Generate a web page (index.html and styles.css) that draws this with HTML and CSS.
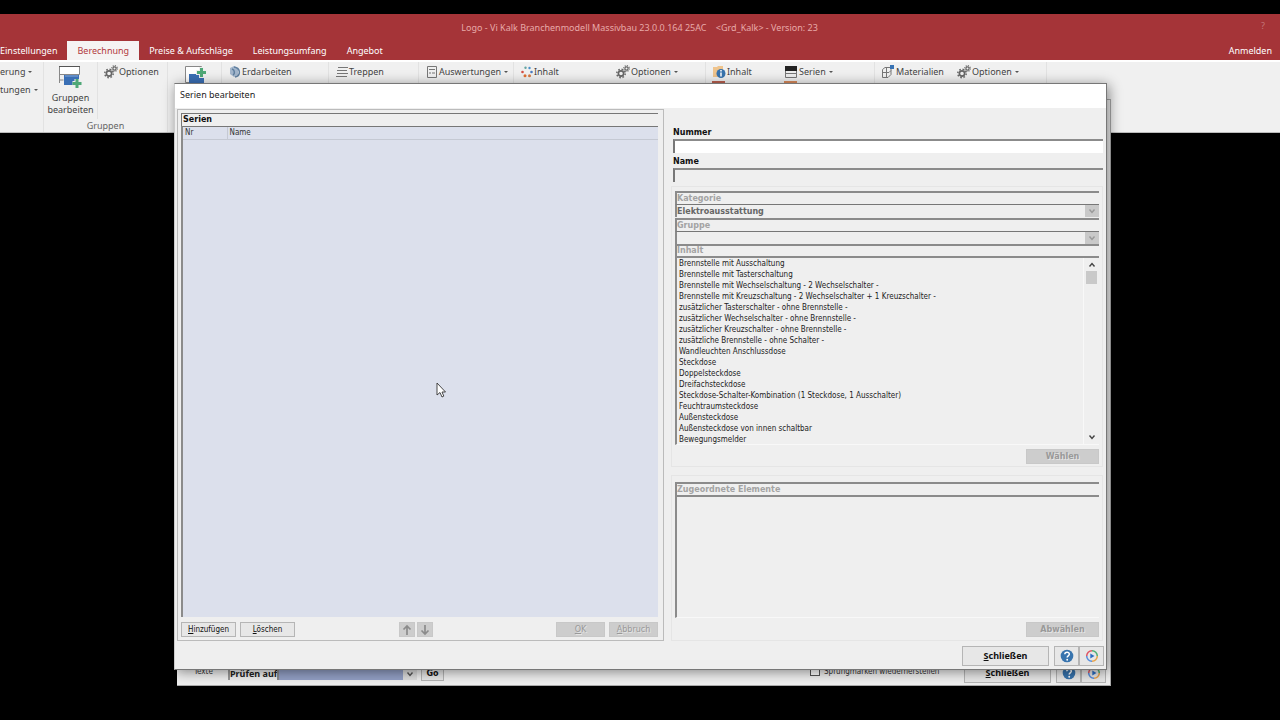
FILE: index.html
```html
<!DOCTYPE html>
<html lang="de">
<head>
<meta charset="utf-8">
<title>Serien bearbeiten</title>
<link rel="stylesheet" href="styles.css">
</head>
<body>
<svg class="defs" aria-hidden="true">
  <symbol id="gears" viewBox="0 0 14 14">
    <circle cx="5" cy="8.500" r="2.600" fill="none" stroke="#666" stroke-width="1.600"/>
    <circle cx="5" cy="8.500" r="4.200" fill="none" stroke="#666" stroke-width="1.500" stroke-dasharray="1.600 1.700"/>
    <circle cx="10.500" cy="3.500" r="1.600" fill="none" stroke="#666" stroke-width="1.200"/>
    <circle cx="10.500" cy="3.500" r="2.800" fill="none" stroke="#666" stroke-width="1.200" stroke-dasharray="1.100 1.100"/>
  </symbol>
  <symbol id="group" viewBox="0 0 24 24">
    <path d="M1.500 1.500h20v8h-20zM1.500 9v9M1.500 15h4" fill="#fff" stroke="#888"/>
    <path d="M1 1.500h21" stroke="#555"/>
    <path d="M6 10h15v10H6z" fill="#3a6fb5"/>
    <path d="M7 11h13" stroke="#87aad8"/>
    <path d="M19 14v9M14.500 18.500h9" stroke="#eee" stroke-width="5"/>
    <path d="M19 14v9M14.500 18.500h9" stroke="#4fa877" stroke-width="3"/>
  </symbol>
  <symbol id="help" viewBox="0 0 14 14">
    <circle cx="7" cy="7" r="6.300" fill="#3874ae"/>
    <path d="M4.800 5.300c.2-3 4.700-2.700 4.500 0-.1 1.500-2.100 1.600-2.100 3.200" fill="none" stroke="#fff" stroke-width="1.500"/>
    <circle cx="7.200" cy="10.700" r=".95" fill="#fff"/>
  </symbol>
  <symbol id="wheel" viewBox="0 0 14 14">
    <g fill="none" stroke-width="1.500">
      <path d="M7 1.700A5.300 5.300 0 0 1 12.300 7" stroke="#4cae73"/>
      <path d="M12.300 7A5.300 5.300 0 0 1 7 12.300" stroke="#e9a34a"/>
      <path d="M7 12.300A5.300 5.300 0 0 1 1.700 7" stroke="#568ddd"/>
      <path d="M1.700 7A5.300 5.300 0 0 1 7 1.700" stroke="#df5361"/>
    </g>
    <path d="M5.300 4.500 9.500 7 5.300 9.500z" fill="#2c6fc4"/>
  </symbol>
  <symbol id="down" viewBox="0 0 8 8"><path d="M1.500 2.500 4 5.500 6.500 2.500" fill="none" stroke="currentColor" stroke-width="1.400"/></symbol>
  <symbol id="up" viewBox="0 0 8 8"><path d="M1.500 5.500 4 2.500 6.500 5.500" fill="none" stroke="currentColor" stroke-width="1.400"/></symbol>
</svg>

<header class="app">
  <div class="titlebar"><span class="title">Logo - Vi Kalk Branchenmodell Massivbau 23.0.0.164 25AC&nbsp;&nbsp;&nbsp; &lt;Grd_Kalk&gt; - Version: 23</span><span class="hint">?</span></div>
  <nav class="tabs">
    <button class="tab tab-first">Einstellungen</button>
    <button class="tab active">Berechnung</button>
    <button class="tab">Preise &amp; Aufschläge</button>
    <button class="tab">Leistungsumfang</button>
    <button class="tab">Angebot</button>
    <button class="tab login">Anmelden</button>
  </nav>
  <div class="ribbon">
    <div class="col c0">
      <button class="cmd">erung<i class="arrow"></i></button>
      <button class="cmd">tungen<i class="arrow"></i></button>
    </div>
    <section class="group">
      <div class="group-items">
        <div class="col big"><button class="bigcmd"><svg class="i24"><use href="#group"/></svg>Gruppen<br>bearbeiten</button></div>
        <div class="col c1"><button class="cmd"><svg class="i14"><use href="#gears"/></svg>Optionen</button></div>
      </div>
      <div class="caption">Gruppen</div>
    </section>
    <div class="col big">
      <button class="bigcmd" aria-label="Bauteile"><svg class="i24" viewBox="0 0 24 24"><path d="M2.500 1.500h16v16h-16z" fill="#fff" stroke="#888"/><path d="M6 9h15v12H6z" fill="#3a6fb5"/><path d="M18.500 2v11M13 7.500h10" stroke="#eee" stroke-width="5"/><path d="M18.500 3v9M14 7.500h9" stroke="#4fa877" stroke-width="3"/></svg></button>
    </div>
    <div class="col c2"><button class="cmd"><svg class="i12" viewBox="0 0 12 12"><path d="M1 2 5 0l4 2v7L5 11 1 8z" fill="#a3b6cc"/><path d="M5 1c7 1 7 9 1 10M3 3c3 1 3 5 1 6" fill="none" stroke="#607f9f" stroke-width="1.500"/></svg>Erdarbeiten</button></div>
    <div class="col c3"><button class="cmd"><svg class="i12" viewBox="0 0 12 12"><path d="M2 1.500h10M1 4.500h10M1 7.500h11M0 10.500h11" stroke="#777"/></svg>Treppen</button></div>
    <div class="col c4"><button class="cmd"><svg class="i12" viewBox="0 0 12 12"><path d="M1.500 .5h9v11h-9zM3 3.500h6M3 7h2M6 7h3" fill="none" stroke="#777"/></svg>Auswertungen<i class="arrow"></i></button></div>
    <div class="col c5"><button class="cmd"><svg class="i12" viewBox="0 0 12 12"><circle cx="4.500" cy="1.800" r="1.200" fill="#65a5a1"/><circle cx="8.500" cy="2" r="1.200" fill="#4a91cc"/><circle cx="10.500" cy="6" r="1.300" fill="#4b7bc0"/><circle cx="1.500" cy="6" r="1.300" fill="#d54e44"/><circle cx="4" cy="9.800" r="1.500" fill="#e06d32"/><circle cx="8.500" cy="9.800" r="1.500" fill="#d67a43"/></svg>Inhalt</button></div>
    <div class="col c6"><button class="cmd"><svg class="i14"><use href="#gears"/></svg>Optionen<i class="arrow"></i></button></div>
    <div class="col c7"><button class="cmd"><svg class="i14" viewBox="0 0 14 14"><path d="M1 2h4l1-1h5v11H1z" fill="#efc48d"/><circle cx="9" cy="8.500" r="4.500" fill="#3873ad"/><path d="M9 7.500v4M9 5v1.500" stroke="#fff" stroke-width="1.500"/></svg>Inhalt</button><span class="peek red"></span></div>
    <div class="col c8"><button class="cmd"><svg class="i14" viewBox="0 0 14 14"><path d="M1.500 1.500h11v11h-11z" fill="#eee" stroke="#777"/><path d="M1 1h12v5H1z" fill="#222"/><path d="M1 8.500h12" stroke="#777"/></svg>Serien<i class="arrow"></i></button><span class="peek orange"></span></div>
    <div class="col c9"><button class="cmd"><svg class="i14" viewBox="0 0 14 14"><path d="M1.500 4.500 4 2.500h6v7l-3 3H1.500zM1.500 7.500H8l2-2M5.500 3v9" fill="none" stroke="#777"/><path d="M9 0h4v4H9z" fill="#3873b4"/></svg>Materialien</button></div>
    <div class="col c10"><button class="cmd"><svg class="i14"><use href="#gears"/></svg>Optionen<i class="arrow"></i></button></div>
  </div>
</header>

<section class="window back" aria-label="Berechnung">
  <div class="back-row">
    <span class="back-text">Texte</span>
    <label class="find" for="find">Prüfen auf</label>
    <div class="combo blue"><select id="find"><option></option></select><span class="drop"><svg class="i8"><use href="#down"/></svg></span></div>
    <button class="btn go">Go</button>
    <label class="check"><input type="checkbox">Sprungmarken wiederherstellen</label>
    <button class="btn close"><span><u>S</u>chließen</span></button>
    <div class="icons"><button class="btn icon" aria-label="Hilfe"><svg class="i14"><use href="#help"/></svg></button><button class="btn icon" aria-label="Info"><svg class="i14"><use href="#wheel"/></svg></button></div>
  </div>
</section>

<section class="window front" role="dialog" aria-labelledby="dlg">
  <h1 class="dlg-title" id="dlg">Serien bearbeiten</h1>
  <div class="dlg-body">
    <div class="left">
      <h2 class="head dark">Serien</h2>
      <div class="grid-box">
        <table class="grid"><thead><tr><th class="nr">Nr</th><th>Name</th></tr></thead></table>
      </div>
      <div class="actions">
        <button class="btn"><span><u>H</u>inzufügen</span></button>
        <button class="btn"><span><u>L</u>öschen</span></button>
        <div class="arrows">
          <button class="btn off sq" disabled aria-label="Nach oben"><svg class="i12" viewBox="0 0 12 12"><path d="M6 11V2M2.500 5.500 6 2l3.500 3.500" fill="none" stroke="#8b8b8b" stroke-width="1.700"/></svg></button>
          <button class="btn off sq" disabled aria-label="Nach unten"><svg class="i12" viewBox="0 0 12 12"><path d="M6 1v9M2.500 6.500 6 10l3.500-3.500" fill="none" stroke="#8b8b8b" stroke-width="1.700"/></svg></button>
        </div>
        <button class="btn off" disabled><span><u>O</u>K</span></button>
        <button class="btn off" disabled><span><u>A</u>bbruch</span></button>
      </div>
    </div>
    <div class="right">
      <div class="fields">
        <label class="lbl" for="num">Nummer</label>
        <input class="txt white" id="num" type="text">
        <label class="lbl" for="name">Name</label>
        <input class="txt" id="name" type="text">
      </div>
      <div class="box upper">
        <label class="head" for="kat">Kategorie</label>
        <div class="combo"><select id="kat" disabled><option>Elektroausstattung</option></select><span class="drop"><svg class="i8"><use href="#down"/></svg></span></div>
        <label class="head second" for="grp">Gruppe</label>
        <div class="combo"><select id="grp" disabled><option></option></select><span class="drop"><svg class="i8"><use href="#down"/></svg></span></div>
        <h2 class="head slim">Inhalt</h2>
        <div class="listbox">
          <ul class="list">
            <li>Brennstelle mit Ausschaltung</li>
            <li>Brennstelle mit Tasterschaltung</li>
            <li>Brennstelle mit Wechselschaltung - 2 Wechselschalter -</li>
            <li>Brennstelle mit Kreuzschaltung - 2 Wechselschalter + 1 Kreuzschalter -</li>
            <li>zusätzlicher Tasterschalter - ohne Brennstelle -</li>
            <li>zusätzlicher Wechselschalter - ohne Brennstelle -</li>
            <li>zusätzlicher Kreuzschalter - ohne Brennstelle -</li>
            <li>zusätzliche Brennstelle - ohne Schalter -</li>
            <li>Wandleuchten Anschlussdose</li>
            <li>Steckdose</li>
            <li>Doppelsteckdose</li>
            <li>Dreifachsteckdose</li>
            <li>Steckdose-Schalter-Kombination (1 Steckdose, 1 Ausschalter)</li>
            <li>Feuchtraumsteckdose</li>
            <li>Außensteckdose</li>
            <li>Außensteckdose von innen schaltbar</li>
            <li>Bewegungsmelder</li>
          </ul>
          <div class="scroll"><svg class="i8"><use href="#up"/></svg><span class="thumb"></span><svg class="i8 last"><use href="#down"/></svg></div>
        </div>
        <button class="btn off pick" disabled>Wählen</button>
      </div>
      <div class="box lower">
        <h2 class="head">Zugeordnete Elemente</h2>
        <div class="listbox"></div>
        <button class="btn off pick" disabled>Abwählen</button>
      </div>
    </div>
  </div>
  <footer class="dlg-foot">
    <button class="btn close"><span><u>S</u>chließen</span></button>
    <div class="icons"><button class="btn icon" aria-label="Hilfe"><svg class="i14"><use href="#help"/></svg></button><button class="btn icon" aria-label="Info"><svg class="i14"><use href="#wheel"/></svg></button></div>
  </footer>
</section>
<svg class="cursor" viewBox="0 0 10 16" aria-hidden="true"><path d="M1 1v12l3-2.500 2 4.500 1.800-.9L6 10h3.500z" fill="#fff" stroke="#333" stroke-width=".9"/></svg>
</body>
</html>
```

FILE: styles.css
```css
* { box-sizing: border-box; }
html, body { height: 100%; }
body {
  margin: 0;
  padding-top: 14px;
  position: relative;
  overflow: hidden;
  background: #000;
  color: #222;
  font: 9px/12px "Noto Sans", "Open Sans", sans-serif;
}
button, input, select { font: inherit; color: inherit; margin: 0; border-radius: 0; }
h1, h2, ul { margin: 0; padding: 0; font-weight: normal; }
svg { display: block; flex: none; }
.defs { position: absolute; width: 0; height: 0; }
.cursor { position: absolute; left: 436px; top: 382px; width: 10px; height: 16px; }
.i8 { width: 8px; height: 8px; }
.i12 { width: 12px; height: 12px; }
.i14 { width: 14px; height: 14px; }
.i24 { width: 24px; height: 24px; }

/* Application frame */
.titlebar { display: flex; height: 27px; background: #a53438; color: #e8aaa9; line-height: 28px; padding-right: 15px; }
.title { flex: 1; padding-left: 18px; text-align: center; white-space: pre; }
.hint { color: #c4777a; line-height: 24px; }
.tabs { display: flex; height: 19px; background: #a53438; color: #fff; }
.tab { border: 0; background: none; padding: 0 10px; white-space: nowrap; }
.tab-first { padding-left: 0; }
.tab.active { background: #f5f3f3; color: #b23a40; }
.login { margin-left: auto; padding-right: 8px; }
.ribbon { display: flex; height: 73px; background: #f0f0f0; border-top: 2px solid #fff; border-bottom: 1px solid #bbb; color: #444; }
.col { flex: none; display: flex; flex-direction: column; align-items: flex-start; gap: 4px; padding: 3px 0 0 6px; border-right: 1px solid #e2e2e2; }
.cmd { display: flex; align-items: center; gap: 1px; height: 14px; padding: 0; border: 0; background: none; white-space: nowrap; }
.arrow { border: 2px solid transparent; border-top-color: #555; margin: 2px 0 0 2px; }
.c0 { width: 44px; padding-left: 0; }
.group { display: flex; flex-direction: column; border-right: 1px solid #e2e2e2; }
.group-items { display: flex; height: 57px; }
.group .c1 { border: 0; width: 69px; }
.caption { text-align: center; color: #666; line-height: 13px; }
.big { width: 54px; padding: 3px 0 0; align-items: center; }
.bigcmd { display: flex; flex-direction: column; align-items: center; padding: 0; border: 0; background: none; line-height: 12px; }
.bigcmd svg { margin-bottom: 3px; }
.c2 { width: 107px; }
.c3 { width: 90px; }
.c4 { width: 95px; }
.c5 { width: 96px; border: 0; }
.c6 { width: 96px; }
.c7 { width: 72px; border: 0; }
.c8 { width: 97px; }
.c9 { width: 76px; border: 0; }
.c10 { width: 96px; }
.c2, .c3, .c4, .c5 { padding-left: 7px; }
.c7, .c8 { gap: 2px; }
.peek { width: 13px; height: 12px; }
.red { background: #b9604f; }
.orange { background: #d88a5c; }

/* Windows */
.window { position: absolute; display: flex; flex-direction: column; background: #efefef; }
.back { inset: 99px 169px 34px 177px; justify-content: flex-end; border: 1px solid #aaa; border-left: 0; }
.front { inset: 83px 173px 50px 174px; border: 1px solid #777; border-left-color: #ccc; box-shadow: 2px 2px 12px rgba(0, 0, 0, .45); }
.dlg-title { background: #fff; font-size: 9px; line-height: 22px; height: 24px; padding-left: 5px; }
.dlg-body { flex: 1; display: grid; grid-template-columns: 487fr 432fr; gap: 7px; padding: 1px 3px 0 2px; min-height: 0; }
.left { display: flex; flex-direction: column; border: 1px solid #bbb; padding: 3px 5px 3px 3px; }
.right { display: flex; flex-direction: column; }
.head { display: block; border-top: 2px solid #8b8b8b; border-left: 2px solid #8b8b8b; font: bold 8px/11px "DejaVu Sans", sans-serif; height: 13px; color: #a3a3a3; white-space: nowrap; }
.dark { color: #111; border-width: 1px; padding-left: 1px; border-color: #777; }
.grid-box { flex: 1; background: #dce0ec; border-top: 1px solid #777; border-left: 2px solid #8b8b8b; }
.grid { width: 100%; border-collapse: collapse; color: #333; font: 8px/12px "DejaVu Sans Condensed", "DejaVu Sans", sans-serif; }
.grid th { text-align: left; font-weight: normal; padding: 0 2px; border-bottom: 1px solid #c5c9d3; }
.grid .nr { width: 44px; border-right: 1px solid #c5c9d3; }
.actions { display: flex; gap: 4px; padding-top: 5px; }
.btn { display: flex; align-items: center; justify-content: center; height: 15px; width: 55px; padding: 0; border: 1px solid #b5b5b5; background: #e7e7e7; color: #111; font: 8px/11px "DejaVu Sans", sans-serif; white-space: nowrap; }
.left .btn { font-family: "DejaVu Sans Condensed", "DejaVu Sans", sans-serif; }
.btn.off { background: #cdcdcd; border-color: #c8c8c8; color: #999; width: 49px; text-shadow: 1px 1px #e4e4e4; }
.left .btn.off { font-family: "DejaVu Sans", sans-serif; }
.btn.sq { width: 16px; }
.arrows { flex: 1; display: flex; justify-content: center; gap: 2px; padding-right: 20px; }
.fields { display: flex; flex-direction: column; padding: 17px 0 0 2px; }
.lbl { font: bold 8px/13px "DejaVu Sans", sans-serif; color: #111; }
.txt { width: 100%; height: 14px; margin-bottom: 2px; padding: 0 2px; border: 0; border-top: 2px solid #8b8b8b; border-left: 2px solid #777; background: #efefef; }
.white { background: #fff; }
.box { display: flex; flex-direction: column; border: 1px solid #e5e5e5; padding: 4px 3px 2px 3px; }
.upper { margin-top: 2px; height: 281px; }
.lower { flex: 1; margin-top: 8px; padding-top: 6px; padding-bottom: 3px; }
.combo { display: flex; height: 13px; border-top: 1px solid #777; border-left: 2px solid #8b8b8b; }
.combo select { flex: 1; min-width: 0; appearance: none; border: 0; padding: 0; background: none; opacity: 1; color: #666; font: bold 8px/11px "DejaVu Sans", sans-serif; }
.second { margin-top: 1px; }
.slim { height: 12px; line-height: 10px; }
.drop { display: flex; align-items: center; justify-content: center; width: 14px; background: #c9c9c9; color: #999; }
.listbox { flex: 1; display: flex; min-height: 0; border-top: 2px solid #8b8b8b; border-left: 2px solid #8b8b8b; border-bottom: 1px solid #f8f8f8; }
.list { flex: 1; list-style: none; padding: 0 2px; font: 8px/11px "DejaVu Sans Condensed", "DejaVu Sans", sans-serif; color: #222; overflow: hidden; white-space: nowrap; }
.scroll { width: 16px; display: flex; flex-direction: column; align-items: center; gap: 2px; border-left: 1px solid #f8f8f8; padding: 3px 2px; color: #444; }
.thumb { width: 11px; height: 13px; background: #c9c9c9; }
.last { margin-top: auto; }
.btn.pick { align-self: flex-end; width: 73px; margin-top: 4px; font-weight: bold; }
.dlg-foot { display: flex; justify-content: flex-end; gap: 5px; padding: 5px 2px 3px; }
.btn.close { width: 87px; height: 20px; font: bold 9px/12px "Noto Sans", sans-serif; }
.icons { display: flex; }
.btn.icon { width: 25px; height: 20px; }

/* Bottom row of the window behind */
.back-row { display: flex; align-items: center; height: 24px; padding: 0 4px 0 17px; }
.back-text, .check { font: 8px/11px "DejaVu Sans Condensed", "DejaVu Sans", sans-serif; color: #333; padding-bottom: 4px; }
.back-text { width: 34px; }
.find { flex: none; border-left: 2px solid #999; font: bold 9px/13px "Noto Sans", sans-serif; width: 49px; white-space: nowrap; }
.combo.blue { width: 140px; background: #93a0c6; }
.blue .drop { background: #ddd; color: #555; }
.btn.go { width: 23px; margin-left: 4px; font-weight: bold; }
.check { display: flex; align-items: center; gap: 4px; margin-left: auto; width: 154px; white-space: nowrap; }
.check input { appearance: none; width: 10px; height: 10px; border: 1px solid #555; background: #fff; }
.back-row .icons { margin-left: 5px; }
```
